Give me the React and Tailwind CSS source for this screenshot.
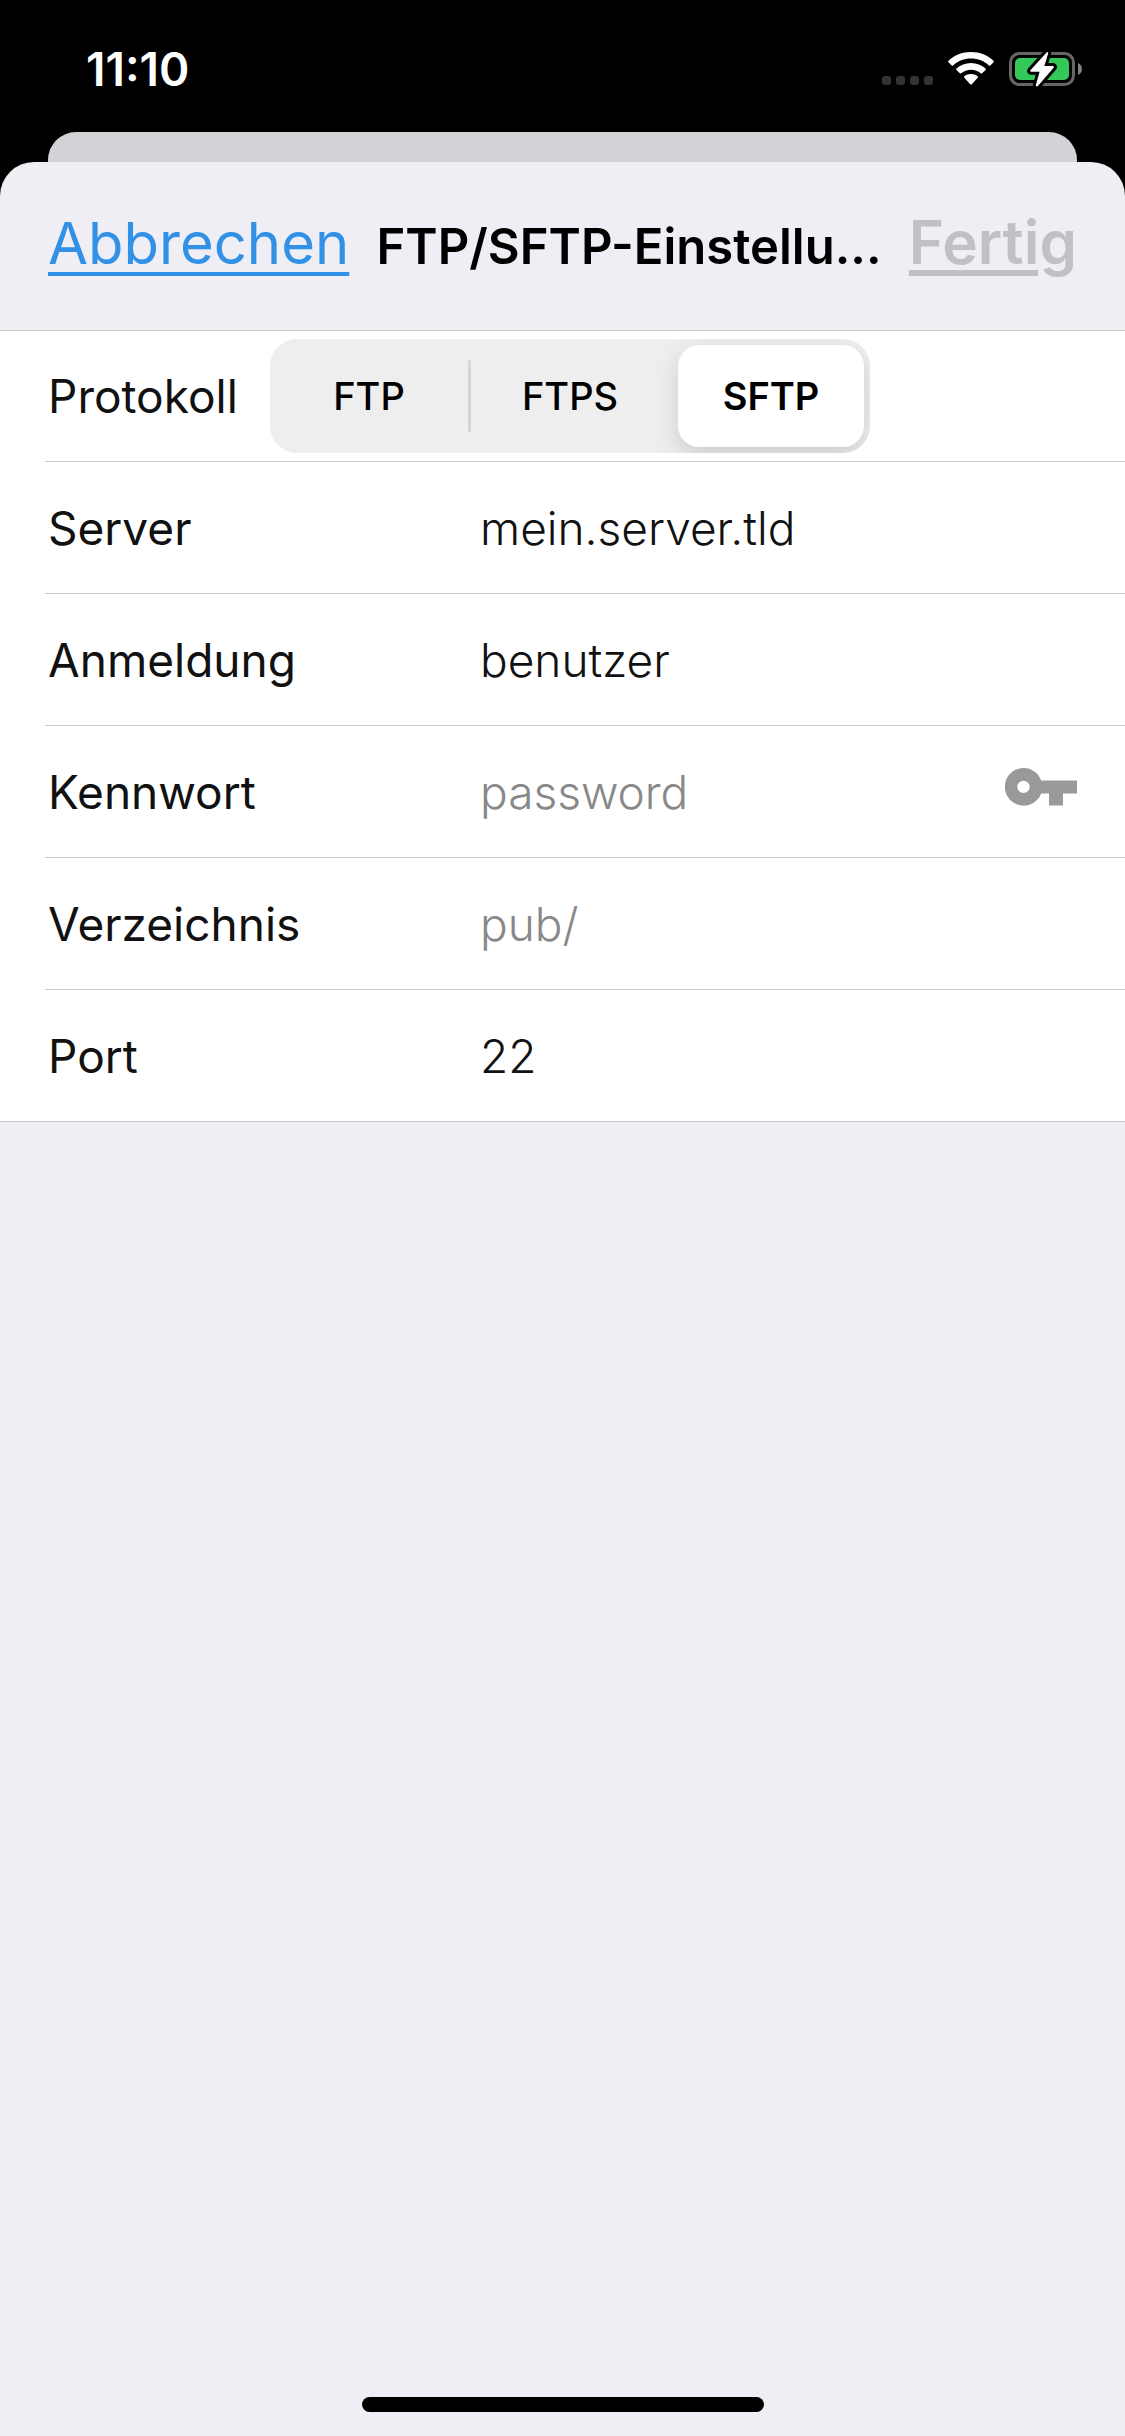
import React, { Fragment, useState } from 'react';

const protocols = ['FTP', 'FTPS', 'SFTP'];

const fields = [
    { id: 'server', label: 'Server', type: 'text', initial: 'mein.server.tld' },
    { id: 'login', label: 'Anmeldung', type: 'text', initial: 'benutzer' },
    { id: 'password', label: 'Kennwort', type: 'password', initial: '', placeholder: 'password' },
    { id: 'directory', label: 'Verzeichnis', type: 'text', initial: '', placeholder: 'pub/' },
    { id: 'port', label: 'Port', type: 'text', initial: '22' },
];

const WifiIcon = () => (
    <svg width="46" height="34" viewBox="0 0 46 34" fill="#fff" aria-hidden="true">
        <path d="M23 0C14.200 0 6.300 3.300 0.500 8.800Q-0.100 9.500 0.500 10.200L3.700 13.400Q4.400 14 5.100 13.400C9.800 9.100 16.100 6.600 23 6.600S36.200 9.100 40.900 13.400Q41.600 14 42.300 13.400L45.500 10.200Q46.100 9.500 45.500 8.800C39.700 3.300 31.800 0 23 0Z" />
        <path d="M23 11C17.400 11 12.300 13.100 8.400 16.600Q7.800 17.300 8.400 18L11.900 21.300Q12.600 21.900 13.300 21.300C15.900 19.100 19.300 17.800 23 17.800S30.100 19.100 32.700 21.300Q33.400 21.900 34.100 21.300L37.600 18Q38.200 17.300 37.600 16.600C33.700 13.100 28.600 11 23 11Z" />
        <path d="M23 22.100C20.400 22.100 18.100 22.900 16.300 24.300Q15.600 25 16.300 25.700L22.200 32.300Q23 33 23.800 32.300L29.700 25.700Q30.400 25 29.700 24.300C27.900 22.900 25.600 22.100 23 22.100Z" />
    </svg>
);

const BatteryIcon = () => (
    <svg width="74" height="36" viewBox="0 0 74 36" aria-hidden="true">
        <rect x="1.500" y="2.500" width="63" height="31" rx="9" fill="none" stroke="#666" strokeWidth="3" />
        <rect x="6" y="7" width="54" height="22" rx="5" fill="#34c759" />
        <path d="M69 12V24C71.500 23 73 20.800 73 18S71.500 13 69 12Z" fill="#808080" />
        <path
            d="M37.800 1.200L21.400 19.200Q20.600 20.600 22.200 20.700H30.600L26.800 34.200Q27.200 36.300 28.900 35L44.800 16.500Q45.400 15.100 43.800 15H35.400L39.200 2.200Q39.100 0.400 37.800 1.200Z"
            fill="#fff"
            stroke="#000"
            strokeWidth="6"
            strokeLinejoin="round"
            paintOrder="stroke"
        />
    </svg>
);

const KeyIcon = () => (
    <svg width="72" height="38" viewBox="0 0 72 38" fill="#999" aria-hidden="true">
        <path
            fillRule="evenodd"
            d="M18.500 0A18.800 18.800 0 1 0 36.200 25.500H44V37.500H58V25.500H72V12.500H36.200A18.800 18.800 0 0 0 18.500 0ZM18.500 12.700A6.200 6.200 0 1 1 18.500 25.100A6.200 6.200 0 1 1 18.500 12.700Z"
        />
    </svg>
);

const StatusBar = () => (
    <div className="flex h-[132px] items-start justify-between pt-[42px] pr-[42px] pl-[86px] text-white">
        <span className="text-[46px] leading-[54px] font-semibold">11:10</span>
        <div className="flex h-[54px] items-center">
            <div className="mt-[22px] mr-[15px] flex gap-[5px]">
                {[0, 1, 2, 3].map(i => (
                    <span key={i} className="size-[9px] rounded-[3px] bg-[#333]" />
                ))}
            </div>
            <WifiIcon />
            <div className="ml-[15px]">
                <BatteryIcon />
            </div>
        </div>
    </div>
);

const ProtocolPicker = ({ value, onChange }) => (
    <div
        role="radiogroup"
        aria-labelledby="protocol-label"
        className="flex h-[114px] w-[600px] overflow-hidden rounded-[27px] bg-[#eee]"
    >
        {protocols.map((name, index) => {
            const active = name === value;
            // The separator is hidden next to the selected segment
            const showLine = !active && protocols[index - 1] !== value;
            return (
                <Fragment key={name}>
                    {index > 0 && (
                        <span className={`my-[21px] w-[3px] rounded-full ${showLine ? 'bg-[#d5d5d5]' : ''}`} />
                    )}
                    <label className="flex flex-1 p-[6px] text-[38px] leading-[48px] text-black">
                        <input
                            type="radio"
                            name="protocol"
                            value={name}
                            checked={active}
                            onChange={() => onChange(name)}
                            className="sr-only"
                        />
                        <span
                            className={`flex flex-1 items-center justify-center rounded-[21px] ${
                                active
                                    ? 'bg-white font-semibold shadow-[0_9px_24px_rgba(0,0,0,0.14)]'
                                    : 'font-medium'
                            }`}
                        >
                            {name}
                        </span>
                    </label>
                </Fragment>
            );
        })}
    </div>
);

const App = () => {
    const [protocol, setProtocol] = useState('SFTP');
    const [values, setValues] = useState(
        Object.fromEntries(fields.map(field => [field.id, field.initial]))
    );

    const handleChange = (event) => {
        setValues({ ...values, [event.target.id]: event.target.value });
    };

    return (
        <div className="flex min-h-screen flex-col bg-black font-['Inter',sans-serif] text-[#111]">
            <StatusBar />

            {/* Edge of the page lying behind the sheet */}
            <div className="mx-12 h-[30px] rounded-t-[28px] bg-[#d3d2d7]" />

            <form
                onSubmit={event => event.preventDefault()}
                className="flex flex-1 flex-col rounded-t-[34px] bg-[#efeef4]"
            >
                <header className="flex h-[169px] items-baseline justify-between border-b border-[#c8c7cc] px-12 pt-[42px]">
                    <button
                        type="button"
                        className="text-[58px] leading-[76px] text-[#3191e6] underline decoration-[4px] underline-offset-[8px]"
                    >
                        Abbrechen
                    </button>
                    <h1 className="text-[49px] leading-[76px] font-semibold text-black">FTP/SFTP-Einstellu...</h1>
                    <button
                        type="submit"
                        disabled
                        className="text-[60px] leading-[76px] font-semibold text-[#c1c1c3] underline decoration-[6px] underline-offset-[6px]"
                    >
                        Fertig
                    </button>
                </header>

                <div className="border-b border-[#c8c7cc] bg-white pl-[45px]">
                    <div className="flex h-[131px] items-center border-b border-[#c8c7cc] pl-[3px]">
                        <span id="protocol-label" className="w-[222px] text-[46px] leading-[60px]">
                            Protokoll
                        </span>
                        <ProtocolPicker value={protocol} onChange={setProtocol} />
                    </div>

                    {fields.map(field => (
                        <div
                            key={field.id}
                            className="flex h-[132px] items-center border-b border-[#c8c7cc] pr-12 pl-[3px] last:h-[131px] last:border-b-0"
                        >
                            <label htmlFor={field.id} className="w-[432px] text-[46px] leading-[60px]">
                                {field.label}
                            </label>
                            <input
                                id={field.id}
                                type={field.type}
                                value={values[field.id]}
                                placeholder={field.placeholder}
                                onChange={handleChange}
                                className="min-w-0 flex-1 text-[46px] leading-[60px] font-light outline-none placeholder:text-[#888]"
                            />
                            {field.id === 'password' && (
                                <button type="button" aria-label="Schlüssel auswählen" className="mb-[10px]">
                                    <KeyIcon />
                                </button>
                            )}
                        </div>
                    ))}
                </div>

                {/* Home indicator */}
                <div className="mx-auto mt-auto mb-6 h-[15px] w-[402px] rounded-full bg-black" />
            </form>
        </div>
    );
};

export default App;
